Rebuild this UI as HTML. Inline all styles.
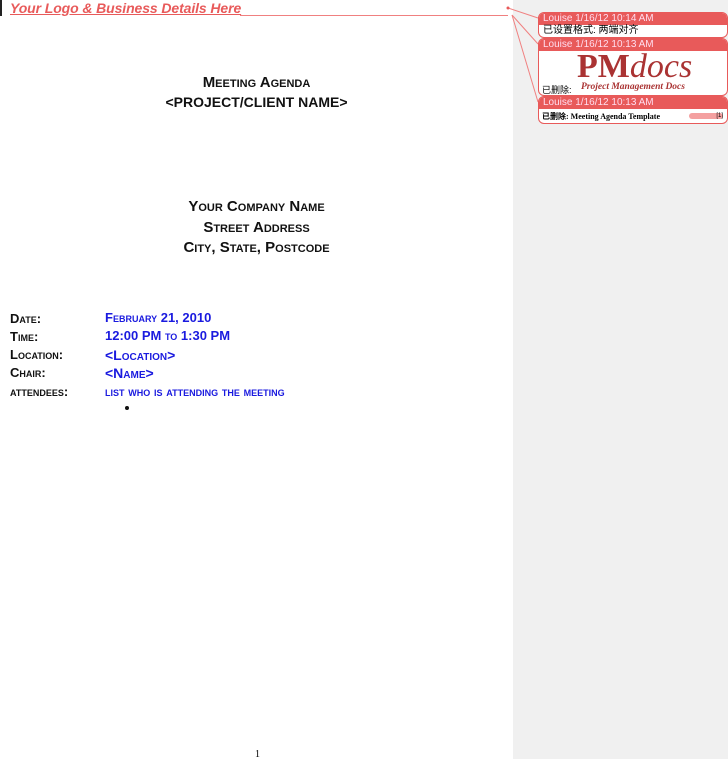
<!DOCTYPE html>
<html><head><meta charset="utf-8"><style>
body{margin:0;width:728px;height:759px;background:#fff;position:relative;overflow:hidden;font-family:"Liberation Sans","Noto Sans CJK SC",sans-serif}
.panel{position:absolute;left:513px;top:0;width:215px;height:759px;background:#f0f0f0}
.t{position:absolute;white-space:nowrap}
.c{left:0;width:513px;text-align:center;font-weight:bold;font-variant:small-caps;color:#111;font-size:14px}
.lab{left:10px;font-weight:bold;font-variant:small-caps;font-size:13px;color:#111}
.val{left:105px;font-weight:bold;font-variant:small-caps;font-size:13px;color:#1a1adf}
.box{position:absolute;left:538px;width:188px;background:#fff;border:1px solid #e85a5a;border-radius:6px;overflow:hidden;font-size:10px}
.hd{background:#e85a5a;color:#fde;height:12px;line-height:12px;padding-left:4px;font-size:10px}
</style></head><body>
<div class="panel"></div>
<div style="position:absolute;left:0;top:0;width:2px;height:16px;background:#222"></div>
<div class="t" style="left:10px;top:0;font-size:14px;font-weight:bold;font-style:italic;color:#e85a5a;text-decoration:underline;letter-spacing:-0.1px">Your Logo &amp; Business Details Here</div>
<svg style="position:absolute;left:0;top:0" width="728" height="130">
<line x1="240" y1="15.5" x2="508" y2="15.5" stroke="#f08080"/>
<line x1="508" y1="8" x2="538" y2="18" stroke="#f08080"/>
<line x1="512" y1="15" x2="538" y2="44" stroke="#f08080"/>
<line x1="512" y1="15" x2="538" y2="102" stroke="#f08080"/>
<circle cx="508" cy="8" r="1.5" fill="#e85a5a"/>
</svg>
<div class="box" style="top:12px;height:24px"><div class="hd">Louise 1/16/12 10:14 AM</div><div style="padding-left:4px;line-height:12px">已设置格式: 两端对齐</div></div>
<div class="box" style="top:38px;height:56px"><div class="hd">Louise 1/16/12 10:13 AM</div>
<div class="t" style="left:38px;top:9px;font-family:'Liberation Serif',serif;font-size:34px;color:#a33;font-weight:bold">PM<i style="font-weight:normal">docs</i></div>
<div class="t" style="left:3px;top:44px;font-size:9px">已删除:</div>
<div class="t" style="left:42px;top:43px;font-family:'Liberation Serif',serif;font-size:9.5px;color:#a33;font-weight:bold;font-style:italic">Project Management Docs</div></div>
<div class="box" style="top:96px;height:26px"><div class="hd">Louise 1/16/12 10:13 AM</div>
<div class="t" style="left:3px;top:14px;font-size:8px;font-family:'Liberation Serif','Noto Sans CJK SC',serif;font-weight:bold">已删除: Meeting Agenda Template</div>
<div class="t" style="left:150px;top:16px;width:34px;height:6px;background:#f4a0a0;border-radius:3px;font-size:6px;text-align:right;line-height:6px">[1]</div></div>

<div class="t c" style="top:74px;font-size:15px">Meeting Agenda</div>
<div class="t c" style="top:94px">&lt;PROJECT/CLIENT NAME&gt;</div>
<div class="t c" style="top:198px;font-size:15px">Your Company Name</div>
<div class="t c" style="top:219px;font-size:15px">Street Address</div>
<div class="t c" style="top:239px;font-size:15px">City, State, Postcode</div>

<div class="t lab" style="top:311px">Date:</div><div class="t val" style="top:310px">February 21, 2010</div>
<div class="t lab" style="top:329px">Time:</div><div class="t val" style="top:328px">12:00 PM to 1:30 PM</div>
<div class="t lab" style="top:347px">Location:</div><div class="t val" style="top:347px;font-size:14px">&lt;Location&gt;</div>
<div class="t lab" style="top:365px">Chair:</div><div class="t val" style="top:365px;font-size:14px">&lt;Name&gt;</div>
<div class="t lab" style="top:384px;font-size:13px">attendees:</div><div class="t val" style="top:384px;font-size:13.5px">list who is attending the meeting</div>
<div style="position:absolute;left:125px;top:406px;width:4px;height:4px;border-radius:50%;background:#111"></div>
<div class="t" style="left:255px;top:749px;font-size:10px;font-family:'Liberation Serif',serif">1</div>
</body></html>
